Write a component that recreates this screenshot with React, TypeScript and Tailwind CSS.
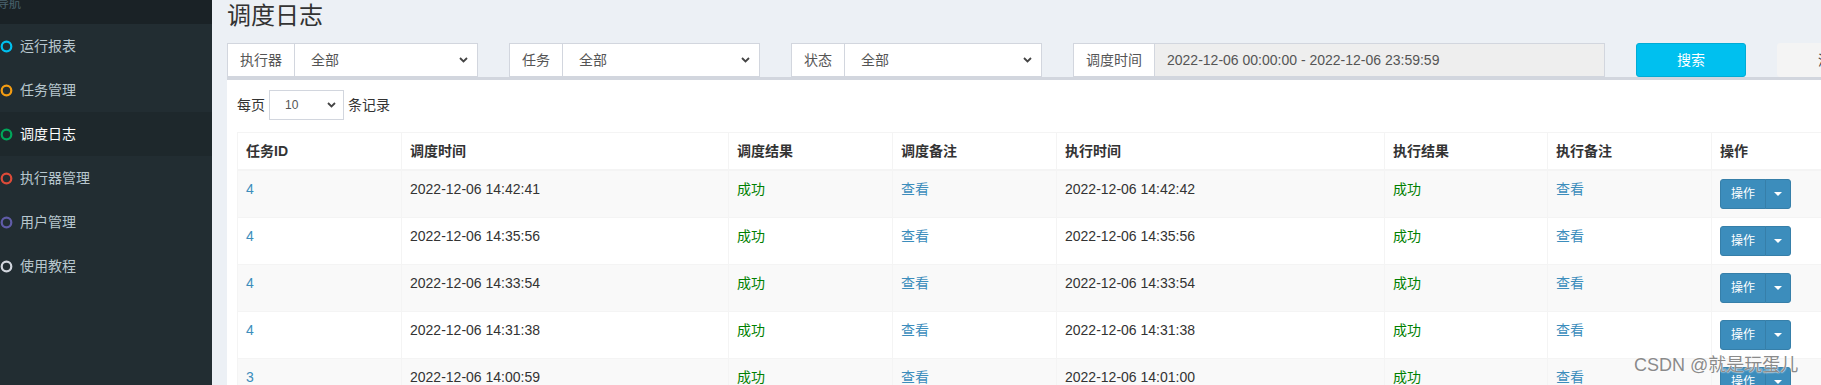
import React from 'react';

const menu = [
  { name: '运行报表', color: '#00c0ef' },
  { name: '任务管理', color: '#f39c12' },
  { name: '调度日志', color: '#00a65a', active: true },
  { name: '执行器管理', color: '#dd4b39' },
  { name: '用户管理', color: '#605ca8' },
  { name: '使用教程', color: '#d2d6de' },
];

const logs = [
  { id: 4, trigger: '2022-12-06 14:42:41', handle: '2022-12-06 14:42:42' },
  { id: 4, trigger: '2022-12-06 14:35:56', handle: '2022-12-06 14:35:56' },
  { id: 4, trigger: '2022-12-06 14:33:54', handle: '2022-12-06 14:33:54' },
  { id: 4, trigger: '2022-12-06 14:31:38', handle: '2022-12-06 14:31:38' },
  { id: 3, trigger: '2022-12-06 14:00:59', handle: '2022-12-06 14:01:00' },
];

const Chevron = () => (
  <svg width="9" height="6" viewBox="0 0 9 6" className="shrink-0">
    <path d="M1 1l3.5 3.5L8 1" fill="none" stroke="#444" strokeWidth="1.8" />
  </svg>
);

const FilterSelect = ({ label, width }: { label: string; width: string }) => (
  <div className={`flex h-[34px] shrink-0 ${width}`}>
    <div className="flex items-center border border-[#d2d6de] bg-white px-[12px] text-[14px] text-[#555]">{label}</div>
    <div className="-ml-px flex flex-1 items-center justify-between border border-[#d2d6de] bg-white pl-[16px] pr-[9px] text-[14px] text-[#555]">
      <span>全部</span>
      <Chevron />
    </div>
  </div>
);

const cols = ['w-[164px]', 'w-[327px]', 'w-[164px]', 'w-[164px]', 'w-[328px]', 'w-[163px]', 'w-[164px]', 'w-[192px]'];
const heads = ['任务ID', '调度时间', '调度结果', '调度备注', '执行时间', '执行结果', '执行备注', '操作'];

const App = () => {
  return (
    <div className="relative flex h-[385px] w-[1821px] overflow-hidden font-['Liberation_Sans','Noto_Sans_CJK_SC',sans-serif]">
      <aside className="w-[212px] shrink-0 bg-[#222d32]">
        <div className="h-[24px] overflow-hidden bg-[#1a2226] pl-0 text-[12px] leading-[12px] text-[#4b646f]">
          <div className="-ml-[3px] -mt-[2px]">导航</div>
        </div>
        <ul>
          {menu.map(m => (
            <li
              key={m.name}
              className={`flex h-[44px] items-center gap-[7px] text-[14px] ${m.active ? 'bg-[#1e282c] text-white' : 'text-[#b8c7ce]'}`}
            >
              <svg width="13" height="13" viewBox="0 0 13 13" className="shrink-0">
                <circle cx="6.5" cy="6.5" r="4.8" fill="none" stroke={m.color} strokeWidth="2.2" />
              </svg>
              <span>{m.name}</span>
            </li>
          ))}
        </ul>
      </aside>

      <main className="min-w-0 flex-1 bg-[#ecf0f5] pl-[15px] text-[#333]">
        <h1 className="pt-[2px] text-[24px] leading-[28px]">调度日志</h1>

        <div className="mt-[13px] flex h-[34px] w-[1700px] gap-[31px]">
          <FilterSelect label="执行器" width="w-[251px]" />
          <FilterSelect label="任务" width="w-[251px]" />
          <FilterSelect label="状态" width="w-[251px]" />
          <div className="flex h-[34px] w-[532px] shrink-0">
            <div className="flex items-center border border-[#d2d6de] bg-white px-[12px] text-[14px] text-[#555]">调度时间</div>
            <div className="-ml-px flex flex-1 items-center border border-[#d2d6de] bg-[#eee] px-[12px] text-[14px] text-[#555]">
              2022-12-06 00:00:00 - 2022-12-06 23:59:59
            </div>
          </div>
          <button className="h-[34px] w-[110px] shrink-0 rounded-[3px] border border-[#00acd6] bg-[#00c0ef] text-[14px] text-white">搜索</button>
          <button className="h-[34px] w-[110px] shrink-0 rounded-[3px] border border-[#f4f4f4] bg-[#f4f4f4] text-[14px] text-[#444]">清空</button>
        </div>

        <div className="w-[1686px] border-t-[3px] border-[#d2d6de] bg-white p-[10px]">
          <div className="flex h-[30px] items-center text-[14px]">
            <span>每页</span>
            <div className="mx-[4px] flex h-[30px] w-[75px] items-center justify-between border border-[#d2d6de] pl-[15px] pr-[7px] text-[12px] text-[#555]">
              <span>10</span>
              <Chevron />
            </div>
            <span>条记录</span>
          </div>

          <table className="mt-[12px] w-[1666px] table-fixed border-collapse text-[14px] leading-[20px]">
            <thead>
              <tr className="bg-white">
                {heads.map((h, i) => (
                  <th key={h} className={`${cols[i]} border border-b-2 border-[#f4f4f4] p-[8px] text-left font-bold`}>{h}</th>
                ))}
              </tr>
            </thead>
            <tbody>
              {logs.map((r, i) => (
                <tr key={i} className={i % 2 === 0 ? 'bg-[#f9f9f9]' : 'bg-white'}>
                  <td className="border border-[#f4f4f4] p-[8px] align-top text-[#3c8dbc]">{r.id}</td>
                  <td className="border border-[#f4f4f4] p-[8px] align-top">{r.trigger}</td>
                  <td className="border border-[#f4f4f4] p-[8px] align-top text-[#008000]">成功</td>
                  <td className="border border-[#f4f4f4] p-[8px] align-top text-[#3c8dbc]">查看</td>
                  <td className="border border-[#f4f4f4] p-[8px] align-top">{r.handle}</td>
                  <td className="border border-[#f4f4f4] p-[8px] align-top text-[#008000]">成功</td>
                  <td className="border border-[#f4f4f4] p-[8px] align-top text-[#3c8dbc]">查看</td>
                  <td className="border border-[#f4f4f4] p-[8px] align-top">
                    <div className="inline-flex h-[30px]">
                      <span className="flex items-center rounded-l-[3px] border border-[#367fa9] bg-[#3c8dbc] px-[10px] text-[12px] leading-[18px] text-white">操作</span>
                      <span className="-ml-px flex items-center rounded-r-[3px] border border-[#367fa9] bg-[#3c8dbc] px-[8px]">
                        <span className="h-0 w-0 border-x-[4px] border-t-[4px] border-x-transparent border-t-white" />
                      </span>
                    </div>
                  </td>
                </tr>
              ))}
            </tbody>
          </table>
        </div>
      </main>

      <div className="absolute left-[1634px] top-[353px] text-[18px] leading-[24px] text-[#8a8a8a] [text-shadow:0_0_2px_#fff,0_0_1px_#fff]">
        CSDN @就是玩蛋儿
      </div>
    </div>
  );
};

export default App;
